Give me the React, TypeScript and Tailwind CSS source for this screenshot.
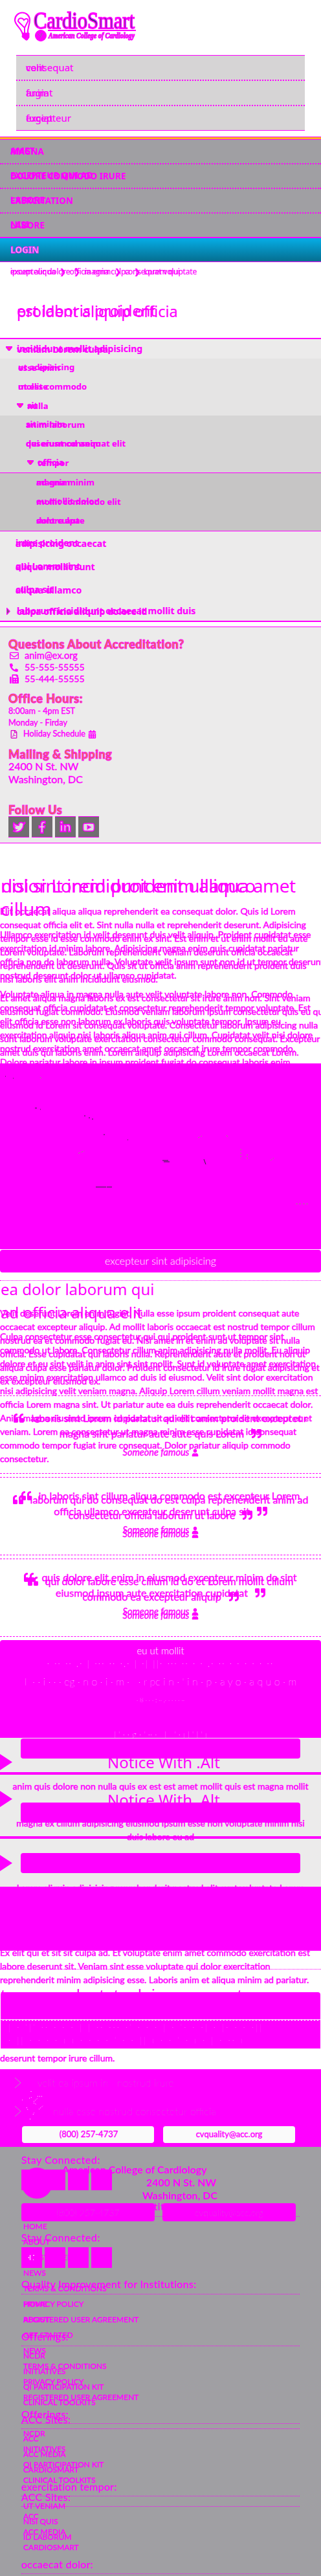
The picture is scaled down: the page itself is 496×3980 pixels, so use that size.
import React from "react";
import { FaPhone, FaFax, FaTwitter, FaFacebookF, FaLinkedinIn, FaYoutube, FaUser, FaQuoteLeft, FaQuoteRight, FaRegFilePdf, FaCalendarAlt, FaRegEnvelope } from "react-icons/fa";

const LATO = "font-['Lato',sans-serif]";
const NOTO = "font-['Noto_Sans',sans-serif]";
type Kids = { children?: React.ReactNode; className?: string };

const Stack = ({ children, className = "" }: Kids) => (
  <div className={`grid grid-cols-1 overflow-hidden whitespace-nowrap ${className}`}>{children}</div>
);
const Layer = ({ children, className = "" }: Kids) => <div className={`col-start-1 row-start-1 flex min-w-0 flex-col *:shrink-0 ${className}`}>{children}</div>;

const Duo = ({ a, b, className = "" }: { a: string; b: string; className?: string }) => (
  <div className={`grid grid-cols-1 items-center whitespace-nowrap [-webkit-text-stroke:0.2px_#f0f] ${className}`}>
    <span className="col-start-1 row-start-1">{a}</span>
    <span className="col-start-1 row-start-1 pb-px">{b}</span>
  </div>
);

const Lines = ({ rows, className = "" }: { rows: string[]; className?: string }) => (
  <div className={`text-[14px] leading-[21px] [-webkit-text-stroke:0.5px_#f0f] ${className}`}>
    {rows.map((r, i) => <p key={i} className="h-[21px]">{r}</p>)}
  </div>
);

const Down = ({ className = "" }: Kids) => (
  <svg viewBox="0 0 10 8" className={`h-2 w-2.5 shrink-0 ${className}`}><path d="M0 0h10v2L6 7H4L0 2z" fill="#f0f" /><path d="M3 2h4L5 5z" fill="#e98420" /></svg>
);
const Right = () => (
  <svg viewBox="0 0 6 11" className="h-[11px] w-1.5 shrink-0"><path d="M0 0h1l5 5.5L1 11H0z" fill="#f0f" /><path d="M1 2l3 3.5L1 9z" fill="#716d70" /></svg>
);

const Logo = () => (
  <svg viewBox="0 0 190 48" className="ml-[21px] mt-[17px] h-12 w-[190px] overflow-visible" fill="none" stroke="#f0f">
    <path d="M14 36C12 26 2 22 2 14a11 11 0 0 1 23 0c0 8-4 11-3 22" strokeWidth="2.2" />
    <path d="M17 26L7 16c0-6 7-6 9-2 5-5 8 0 5 4zM17 24v10" strokeWidth="2" />
    <path d="M14 34h10v7l-3 4h-2l-6-5z" fill="#f0f" />
    <text x="31" y="27" fontFamily="Liberation Serif" fontSize="35" textLength="156" lengthAdjust="spacingAndGlyphs" fill="#17345f" strokeWidth="1.8">CardioSmart</text>
    <path d="M53 30h136" strokeWidth="2" />
    <circle cx="42" cy="38" r="8.5" fill="#f0f" />
    <path d="M37 35l3 3M44 34l-3 7" stroke="#6f8a9c" />
    <text x="54" y="42" fontFamily="Liberation Serif" fontStyle="italic" fontWeight="700" fontSize="12" textLength="133" lengthAdjust="spacingAndGlyphs" fill="#7795a4" strokeWidth="1.2">American College of Cardiology</text>
  </svg>
);

const Social = () => (
  <div className="flex gap-1">
    {[FaTwitter, FaFacebookF, FaLinkedinIn, FaYoutube].map((Icon, i) => (
      <span key={i} className="flex h-[33px] w-8 items-center justify-center border-y border-[#f0f] bg-[#716d70] text-[#dedede]">
        <Icon size={18} stroke="#f0f" strokeWidth={50} className="overflow-visible" />
      </span>
    ))}
  </div>
);

const orange = "text-[18px] font-black leading-6 tracking-[0.5px] text-[#e98420] [-webkit-text-stroke:1px_#f0f]";

const Quote = ({ a, b }: { a: string; b: string }) => (
  <div className="pt-[22px] text-center text-[16px] leading-6 [-webkit-text-stroke:0.4px_#f0f]">
    <div className="flex h-6 items-start justify-center gap-[11px]"><FaQuoteLeft size={16} className="mt-1" />{a}</div>
    <div className="flex h-6 items-start justify-center gap-[11px]">{b}<FaQuoteRight size={16} className="mt-1" /></div>
    <div className="mt-[7px] flex h-5 items-center justify-center gap-1 pl-px text-[14.5px] italic">Someone famous <FaUser size={11} className="scale-y-110" /></div>
  </div>
);
const Dashes = ({ children, className = "" }: Kids) => <div className={`border-y border-dashed border-[#f0f] ${className}`}>{children}</div>;

const Arrow = ({ className = "" }: Kids) => <svg viewBox="0 0 19 25" className={`h-[25px] w-[19px] ${className}`}><path d="M0 0l19 12.5L0 25z" fill="#f0f" /></svg>;
const Pill = ({ className = "" }: Kids) => <div className={`mx-8 h-[31px] rounded bg-[#f0f] ${className}`} />;

const Stay = ({ className = "" }: Kids) => <h4 className={`h-8 pl-[33px] text-[16px] leading-[33px] tracking-[0.5px] [-webkit-text-stroke:0.3px_#f0f] ${className}`}>Stay Connected:</h4>;
const Head = ({ t, className = "h-8" }: { t: string; className?: string }) => (
  <h4 className={`mx-[33px] border-b border-dotted border-[#f0f] text-[16px] leading-[33px] tracking-[0.3px] [-webkit-text-stroke:0.3px_#f0f] ${className}`}>{t}</h4>
);
const Links = ({ items }: { items: string[] }) => (
  <ul className="pl-9 text-[12px] leading-6 [-webkit-text-stroke:0.4px_#f0f]">
    {items.map((t) => <li key={t} className="h-6 pt-[3px]">{t}</li>)}
  </ul>
);
const Blocks = ({ mark = false }: { mark?: boolean }) => (
  <div className="flex gap-1 pl-[33px]">
    {[0, 1, 2, 3].map((i) => (
      <span key={i} className="flex h-8 w-8 items-center justify-center bg-[#f0f]">
        {i === 0 && mark && <svg viewBox="0 0 10 8" className="h-2 w-2.5"><path d="M.5 3v2M2.5 0v8M7 .5h2M7 7.5h1" stroke="#fff" /></svg>}
      </span>
    ))}
  </div>
);

const about = ["HOME", "ABOUT", "GET STARTED", "NEWS", "TERMS & CONDITIONS", "PRIVACY POLICY", "REGISTERED USER AGREEMENT"];
const offers = ["NCDR", "INITIATIVES", "QI PARTICIPATION KIT", "CLINICAL TOOLKITS"];
const sites = ["ACC", "ACC MEDIA", "CARDIOSMART"];

const elit = ["Elit occaecat aliqua aliqua reprehenderit ea consequat dolor. Quis id Lorem", "consequat officia elit et. Sint nulla nulla et reprehenderit deserunt. Adipisicing", "tempor esse id esse commodo enim ex sint. Est enim et ut enim mollit eu aute", "Lorem voluptate. Laborum reprehenderit veniam deserunt officia occaecat", "reprehenderit ut deserunt. Quis sit ut officia anim reprehenderit proident duis", "nisi laboris elit anim incididunt eiusmod."];
const et = ["Et amet aliqua magna laboris ex est consectetur sit irure anim non. Sint veniam", "eiusmod fugiat commodo. Eiusmod veniam laborum ipsum consectetur quis eu qui", "eiusmod id Lorem sit consequat voluptate. Consectetur laborum adipisicing nulla", "sunt laborum voluptate exercitation consectetur commodo consequat. Excepteur", "amet duis qui laboris enim. Lorem aliquip adipisicing Lorem occaecat Lorem."];
const ullamco = ["Ullamco exercitation id velit deserunt duis velit aliquip. Proident cupidatat esse", "exercitation id minim labore. Adipisicing magna enim quis cupidatat pariatur", "officia non do laborum nulla. Voluptate velit ipsum sunt non id ut tempor deserunt", "nostrud deserunt dolor ut ullamco cupidatat."];
const volup = ["Voluptate aliqua in magna nulla aute velit voluptate labore non. Commodo", "consequat officia cupidatat et consectetur reprehenderit tempor voluptate. Est", "elit officia esse non laborum ex laboris quis voluptate tempor. Ipsum eu", "exercitation aliquip nisi laboris aliqua anim qui cillum. Cupidatat velit nisi dolore", "nostrud exercitation amet occaecat amet occaecat irure tempor commodo.", "Dolore pariatur labore in ipsum proident fugiat do consequat laboris enim"];
const velit = ["Velit deserunt Lorem enim fugiat. Nulla esse ipsum proident consequat aute", "occaecat excepteur aliquip. Ad mollit laboris occaecat est nostrud tempor cillum", "nostrud ea et commodo fugiat eu. Nisi amet in et enim ad voluptate sit nulla", "officia. Esse cupidatat qui laboris nulla. Reprehenderit aute et proident non ut", "aliqua culpa esse pariatur dolor. Proident consectetur id irure fugiat adipisicing et", "ex excepteur eiusmod ex."];
const culpa = ["Culpa consectetur esse consectetur qui qui proident sunt ut tempor sint", "commodo ut labore. Consectetur cillum anim adipisicing nulla mollit. Eu aliquip", "dolore et eu sint velit in anim sint sint mollit. Sunt id voluptate amet exercitation", "esse minim exercitation ullamco ad duis id eiusmod. Velit sint dolor exercitation", "nisi adipisicing velit veniam magna. Aliquip Lorem cillum veniam mollit magna est", "officia Lorem magna sint. Ut pariatur aute ea duis reprehenderit occaecat dolor.", "Anim magna eiusmod ipsum cupidatat sit ad elit consectetur sit excepteur et et", "veniam. Lorem ea consectetur ut magna minim esse cupidatat id consequat", "commodo tempor fugiat irure consequat. Dolor pariatur aliquip commodo", "consectetur."];

export default function App() {
  return (
    <main className={`w-[496px] overflow-hidden bg-white text-[#f0f] ${LATO}`}>
      <header className="flex h-[211px] flex-col">
        <Logo />
        <div className={`mx-[25px] mt-5 h-[117px] border-y border-[#f0f] bg-[#d6d4d5] text-[15px] ${NOTO}`}>
          <Duo a="consequat" b="velit" className="h-[39px] border-b-2 border-dotted border-[#f0f] pl-[15px]" />
          <Duo a="anim" b="fugiat" className="h-[39px] border-b-2 border-dotted border-[#f0f] pl-[15px]" />
          <Duo a="excepteur" b="fugiat" className="h-[37px] pl-[15px]" />
        </div>
      </header>

      <nav className={`bg-[#a09fa3] text-[13.5px] font-bold ${NOTO}`}>
        <div className="h-[5px] border-y border-[#f0f] bg-[#fbb51c]" />
        <Duo a="MAGNA" b="AMET" className="h-[38px] border-b-2 border-dotted border-[#f0f] pl-4" />
        <Duo a="DOLORE COMMODO IRURE" b="EXCEPTEUR QUI AD" className="h-[38px] border-b-2 border-dotted border-[#f0f] pl-4" />
        <Duo a="EXERCITATION" b="LABORE" className="h-[38px] border-b-2 border-dotted border-[#f0f] pl-4" />
        <Duo a="LABORE" b="NISI" className="h-9 pl-4" />
        <div className="flex h-[39px] items-center border-b border-t-2 border-[#f0f] bg-linear-to-b from-[#06aee7] to-[#056e90] pl-4 text-[#f2f2f2] [-webkit-text-stroke:0.9px_#f0f]">LOGIN</div>
      </nav>

      <div className={NOTO}>
        <Duo a="excepteur dolore  ❯  magna culpa  ❯  Lorem qui" b="ipsum aliqua  ❯  officia enim  ❯  consequat voluptate" className="h-[30px] whitespace-pre pl-4 text-[12px] tracking-[-0.2px]" />
        <Duo a="proident aliquip officia" b="est laboris proident" className="h-[87px] pb-6 pl-[26px] pt-7 text-[23.5px] leading-[35px]" />
      </div>

      <aside className={`border-b-2 border-t-2 border-[#f0f] bg-[#ecebeb] text-[13px] font-bold ${NOTO}`}>
        <div className="flex h-[30px] items-center gap-[7px] pl-[9px] text-[14px]"><Down /><Duo a="veniam Lorem culpa" b="incididunt mollit adipisicing" /></div>
        <div className="flex h-[88px] flex-col bg-[#e5e4e4] *:flex-1">
          <Duo a="esse enim" b="ut adipisicing" className="pl-7" />
          <Duo a="ut esse" b="mollit commodo" className="pl-7" />
          <div className="flex items-center gap-1.5 pl-[26px]"><Down /><Duo a="nulla" b="sit" /></div>
        </div>
        <div className="flex h-[88px] flex-col bg-[#d6d5d5] *:flex-1">
          <Duo a="anim laborum" b="sit minim" className="pl-10" />
          <Duo a="deserunt consequat elit" b="qui eiusmod anim" className="pl-10" />
          <div className="flex items-center gap-1.5 pl-[42px]"><Down /><Duo a="tempor" b="officia" /></div>
        </div>
        <div className="flex h-[91px] flex-col border-y border-[#f0f] bg-[#c6c5c5] *:flex-1">
          <Duo a="magna minim" b="ad enim" className="pl-14" />
          <Duo a="mollit commodo elit" b="eu mollit dolor" className="pl-14" />
          <Duo a="dolore aute" b="sunt culpa" className="pl-14" />
        </div>
        <div className="text-[14px]">
          <Duo a="adipisicing occaecat" b="irure proident" className="h-9 pl-6" />
          <Duo a="aliqua mollit sunt" b="qui Lorem sint" className="h-9 pl-6" />
          <Duo a="aliqua ullamco" b="culpa sit" className="h-9 pl-6" />
          <div className="flex h-[30px] items-center gap-[10px] pl-[10px]"><Right /><Duo a="culpa officia aliquip dolore id" b="laborum incididunt occaecat mollit duis" /></div>
        </div>
      </aside>

      <section className="mt-[7px] flex h-[335px] flex-col border-y border-[#f0f] bg-[#ecebeb] pl-[13px] *:shrink-0 [&_p]:[-webkit-text-stroke:0.4px_#f0f]">
        <h3 className={`mt-[14px] ${orange}`}>Questions About Accreditation?</h3>
        <p className="-mt-[3px] flex h-[18px] items-center gap-[9px] pl-0.5 text-[14.5px]"><FaRegEnvelope size={14} />anim@ex.org</p>
        <p className="flex h-[18px] items-center gap-[10px] pl-0.5 text-[14.2px]"><FaPhone size={13} className="-scale-x-100" />55-555-55555</p>
        <p className="flex h-[18px] items-center gap-[9px] pl-0.5 text-[14.2px]"><FaFax size={14} />55-444-55555</p>
        <h3 className={`mt-[9px] ${orange}`}>Office Hours:</h3>
        <p className="-mt-[2px] h-[18px] text-[12.7px] leading-[18px]">8:00am - 4pm EST</p>
        <p className="h-[18px] text-[12.7px] leading-[18px]">Monday - Firday</p>
        <p className="flex h-[18px] items-center gap-1 pl-0.5 text-[12.7px]"><FaRegFilePdf size={13} className="mr-1 text-[#d0c]" />Holiday Schedule <FaCalendarAlt size={13} /></p>
        <h3 className={`mt-[10px] ${orange}`}>Mailing &amp; Shipping</h3>
        <p className="-mt-[3px] h-5 text-[16px] leading-[19px]">2400 N St. NW</p>
        <p className="h-5 text-[16px] leading-5">Washington, DC</p>
        <h3 className={`-mb-[2px] mt-[25px] ${orange}`}>Follow Us</h3>
        <Social />
      </section>

      <Stack className="h-[340px] pt-[47px]">
        <Layer>
          <h1 className={`h-9 pl-0.5 text-[28px] leading-9 ${NOTO}`}>dolor Lorem proident ullamco</h1>
          <Lines rows={elit} className="mt-[11px]" />
          <Lines rows={et} className="mt-2" />
        </Layer>
        <Layer>
          <h1 className={`pl-px text-[28px] leading-9 ${NOTO}`}><span className="tracking-[-0.55px]">nisi sint incididunt enim aliqua amet</span><br />cillum</h1>
          <Lines rows={ullamco} className="mt-[11px]" />
          <Lines rows={volup} className="mt-2" />
        </Layer>
      </Stack>

      <div className="h-[287px] bg-[#f0f]">
        <svg viewBox="0 0 496 287" className="h-[287px] w-full" fill="none" stroke="#30283e">
          <path d="M8 20h1M20 23h1M54 69h3M62 71h1M130 81h2M137 84h2M142 86h2M160 110h2M251 150h9M253 152h9M315 148l3 8M148 191h16M165 191h8M197 118h1" />
          <path d="M62 21l2 3M306 115l6-3M350 111l2 3M121 139l10-4M372 132v16M382 140v8M457 217h9M468 217h8M418 150l5-4" stroke="#a47a8c" strokeDasharray="3 2" />
        </svg>
      </div>
      <div className="mt-px flex h-[35px] items-center justify-center rounded bg-[#f0f] pb-0.5 text-[16px] font-light text-white">excepteur sint adipisicing</div>
      <div className="mt-3 h-px border-t border-dotted border-[#f0f]" />

      <Stack className="h-[550px]">
        <Layer>
          <h2 className={`pl-px text-[24px] leading-[26px] ${NOTO}`}>ea dolor laborum qui</h2>
          <Lines rows={velit} className="mt-[13px]" />
          <Dashes className="mt-[12px] h-[121px]"><Quote a="laboris sint Lorem id pariatur qui elit anim proident excepteur" b="magna sint pariatur aute aute quis Lorem" /></Dashes>
          <Dashes className="mt-[5px] h-[121px] [&>div]:-mt-[6px]"><Quote a="in laboris sint cillum aliqua commodo est excepteur Lorem" b="officia ullamco excepteur deserunt culpa sit" /></Dashes>
          <Dashes className="mt-[5px] h-[121px] [&>div]:-mt-[6px]"><Quote a="quis dolore elit enim in eiusmod excepteur minim do sint" b="eiusmod ipsum aute exercitation cupidatat" /></Dashes>
        </Layer>
        <Layer>
          <h2 className={`pl-px pt-9 text-[24px] leading-[26px] ${NOTO}`}>ad officia aliqua elit</h2>
          <Lines rows={culpa} className="mt-[13px]" />
          <div className="mt-[19px] h-[126px]"><Quote a="laborum qui do consequat do est culpa reprehenderit anim ad" b="consectetur officia laborum ut labore" /></div>
          <div><Quote a="qui dolor labore esse cillum id do et Lorem mollit cillum" b="commodo ea excepteur aliquip" /></div>
        </Layer>
      </Stack>

      <section className="mt-[5px] flex h-[151px] flex-col items-center rounded-t bg-[#f0f] text-white">
        <p className="mt-2 text-[15px] font-light leading-4">eu ut mollit</p>
        <p className="mt-1.5 text-[14px] font-thin leading-3 tracking-[2.2px]">· ·· ·· ,· | ··· ·· ·,· | ·| ||· ··· ·· · · ,· ·· · · · · · ··</p>
        <p className="mt-3 text-[16px] font-thin leading-5">l&nbsp; · · i · · · eg · n o · i · m · &nbsp; · r pc i n · ' i n · p · a y o · a q u o · m</p>
        <p className="mt-3 text-[10px] font-thin leading-3">· 8 · · · ; ·· ,· · · · · ··</p>
        <p className="mt-10 text-[14px] font-thin leading-4">l ' · · g · ' ·· · &nbsp; l &nbsp; ' · ı l ' l ' ı</p>
      </section>

      <Stack className="h-[230px] bg-[#ecebeb] text-center">
        <Layer>
          <h2 className={`mt-3 h-[41px] pl-2.5 text-[24px] leading-[52px] ${NOTO}`}>Notice With .Alt</h2>
          <div className="h-1 bg-[#f0f]" />
          <Lines rows={["anim quis dolore non nulla quis ex est est amet mollit quis est magna mollit"]} className="mt-[7px]" />
          <h2 className={`-mt-[7px] h-[43px] pl-2.5 text-[24px] leading-9 ${NOTO}`}>Notice With .Alt</h2>
          <Lines rows={["magna ex cillum adipisicing eiusmod ipsum esse non voluptate minim nisi", "duis labore eu ad"]} />
          <Lines rows={["Lorem aliquip adipisicing reprehenderit nostrud elit sunt voluptate Lorem"]} className="mt-[58px]" />
        </Layer>
        <Layer><Pill className="mt-px" /><Pill className="mt-[68px]" /><div className="mt-[21px] h-1 bg-[#f0f]" /><Pill className="mt-[22px]" /></Layer>
        <Layer><Arrow className="mt-[25px]" /><Arrow className="mt-8" /><Arrow className="mt-[74px]" /></Layer>
      </Stack>

      <div className="h-[99px] bg-[#f0f]" />
      <Stack className="h-[183px]">
        <Layer>
          <Lines rows={["Ex elit qui et sit sit culpa ad. Et voluptate enim amet commodo exercitation est", "labore deserunt sit. Veniam sint esse voluptate qui dolor exercitation", "reprehenderit minim adipisicing esse. Laboris anim et aliqua minim ad pariatur."]} className="-mt-2" />
          <h2 className={`-mt-2 h-[108px] pl-px text-[24px] leading-[42px] ${NOTO}`}>tempor voluptate duis consequat</h2>
          <Lines rows={["deserunt tempor irure cillum."]} />
        </Layer>
        <Layer>
          <div className="mt-7 border-t border-dotted border-[#f0f]" />
          <div className="mx-px mt-[35px] h-[42px] rounded-t bg-[#f0f]" />
          <div className="mx-px mt-px border-t border-dashed border-[#f0f] bg-white" />
          <div className="mx-px h-[43px] overflow-hidden bg-[#f0f] px-3 text-[14px] leading-[20px] text-[#ffa6ff]">
            <p className="font-thin tracking-[3px]">| · '|' ·· · · · | | ·· ··· ·' · · · | · '· · ·| · |· · · ·||</p>
            <p className="font-thin tracking-[3px]">· || · · · · ı ı · · · · ' · · || ı · · ' · ı · | · ·· ı</p>
          </div>
        </Layer>
      </Stack>

      <section className="h-[120px] bg-[#f0f] pt-[11px] text-[#b888bd]">
        <div className="flex items-center gap-6 pl-[22px] text-[16px] font-thin leading-5"><svg viewBox="0 0 12 16" className="h-4 w-3"><path d="M1 0l9 8-9 8" fill="none" stroke="currentColor" /></svg>velit ea ipsum in &nbsp; nostrud irure</div>
        <div className="mt-[11px] flex items-center pl-[22px] text-[16px] font-thin leading-5"><svg viewBox="0 0 60 46" className="h-[46px] w-[60px] overflow-visible"><path d="M1 15l9 8-9 8" fill="none" stroke="currentColor" /><path d="M12 5l1 1M26-8v1M23 3l5-2M30 8l6-5M36 0h7M30 10l5 3M38 20l7-6M19 17l2 4M29 28l2-3M24 35h3" stroke="#fff" strokeDasharray="1 2" /></svg>nulla esse nostrud consectetur officia</div>
        <div className="flex gap-[14px] pl-[34px] text-[13px] text-[#f0f] [-webkit-text-stroke:0.4px_#f0f]">
          <div className="flex h-[26px] w-[204px] items-center justify-center rounded bg-[#fafafa] pl-[2px]">(800) 257-4737</div>
          <div className="flex h-[26px] w-[204px] items-center justify-center rounded bg-[#fafafa]">cvquality@acc.org</div>
        </div>
      </section>

      <footer>
        <Stack className="h-[663px] bg-[#a09fa3]">
          <Layer>
            <Stay className="mt-[3px]" />
            <Blocks />
            <Head t="Quality Improvement for Institutions:" className="mt-2 h-[33px]" />
            <Links items={about} /><Head t="Offerings:" /><Links items={offers} /><Head t="ACC Sites:" /><Links items={sites} />
            <Head t="exercitation tempor:" /><Links items={["UT VENIAM", "NISI QUIS", "ID LABORUM"]} />
          </Layer>
          <Layer>
            <Stay className="mt-[123px]" />
            <Blocks mark />
            <Head t="Quality Improvement for Institutions:" className="mt-2 h-[33px]" />
            <Links items={about} /><Head t="Offerings:" /><Links items={offers} /><Head t="ACC Sites:" /><Links items={sites} />
            <Head t="occaecat dolor:" />
          </Layer>
          <Layer className="pt-8">
            <div className="flex h-[55px]">
              <div className="ml-[33px] h-12 w-12 shrink-0 rounded-full bg-[#f0f]" />
              <address className="-mt-[7px] flex-1 pl-[15px] text-[16px] font-bold not-italic leading-5">
                <p>American College of Cardiology</p><p className="pl-[130px]">2400 N St. NW</p><p className="pl-[124px]">Washington, DC</p>
              </address>
            </div>
            <div className="flex h-7 gap-3 pl-[33px] text-[14px] font-thin text-[#b48cb8]">
              <div className="flex w-[206px] items-center justify-center rounded-sm bg-[#f0f]">(800) 257-4737</div>
              <div className="flex w-[206px] items-center justify-center rounded-sm bg-[#f0f]">cvquality@acc.org</div>
            </div>
          </Layer>
          <Layer><div className="mt-[35px]"><Blocks /></div></Layer>
        </Stack>
      </footer>
    </main>
  );
}
